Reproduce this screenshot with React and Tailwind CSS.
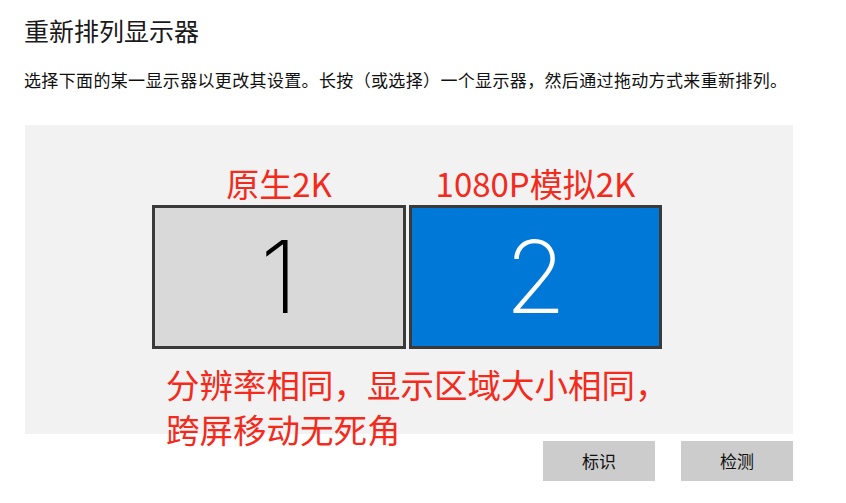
import React from 'react'

const cjk = { fontFamily: '"Noto Sans CJK SC", "Noto Sans", sans-serif' }

function Monitor({ n, active }) {
  return (
    <div
      className={`flex items-center justify-center h-[144px] border-[3px] border-[#3a3a3a] ${
        active ? 'w-[253px] bg-[#0078d7] text-white' : 'w-[254px] bg-[#d9d9d9] text-black'
      }`}
    >
      <span className="text-[100px] leading-none font-extralight" style={{ fontFamily: 'Inter, "Noto Sans", sans-serif' }}>
        {n}
      </span>
    </div>
  )
}

export default function App() {
  return (
    <div className="relative w-[846px] h-[503px] bg-white overflow-hidden text-black" style={cjk}>
      <div className="pl-6 pt-[13px]">
        <h1 className="text-[25px] leading-[34px] text-[#1a1a1a]">重新排列显示器</h1>
        <p className="mt-[21px] text-[17px] leading-[24px] tracking-[0.35px] text-[#111]">
          选择下面的某一显示器以更改其设置。长按（或选择）一个显示器，然后通过拖动方式来重新排列。
        </p>
      </div>

      <div className="ml-[25px] mt-[33px] w-[768px] h-[309px] bg-[#f2f2f2] pt-[36px]">
        <div className="ml-[127px] flex gap-[3px] text-[#f32a1c] text-[33px] leading-[44px]">
          <div className="w-[254px] text-center">原生2K</div>
          <div className="w-[253px] text-center">1080P模拟2K</div>
        </div>
        <div className="ml-[127px] flex gap-[3px]">
          <Monitor n="1" />
          <Monitor n="2" active />
        </div>
      </div>

      <div className="absolute left-[166px] top-[361px] text-[#f32a1c] text-[33.5px] leading-[45px]">
        <div>分辨率相同，显示区域大小相同，</div>
        <div>跨屏移动无死角</div>
      </div>

      <div className="flex justify-end gap-[26px] w-[793px] mt-[7px]">
        <button className="w-[112px] h-[40px] bg-[#cccccc] text-[17px] text-[#111]">标识</button>
        <button className="w-[112px] h-[40px] bg-[#cccccc] text-[17px] text-[#111]">检测</button>
      </div>
    </div>
  )
}
